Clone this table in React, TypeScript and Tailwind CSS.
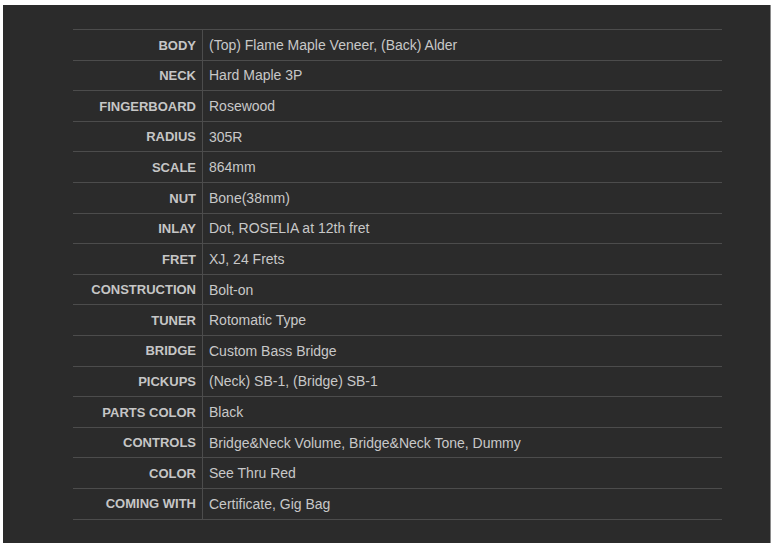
const specs: [string, string][] = [
  ['BODY', '(Top) Flame Maple Veneer, (Back) Alder'],
  ['NECK', 'Hard Maple 3P'],
  ['FINGERBOARD', 'Rosewood'],
  ['RADIUS', '305R'],
  ['SCALE', '864mm'],
  ['NUT', 'Bone(38mm)'],
  ['INLAY', 'Dot, ROSELIA at 12th fret'],
  ['FRET', 'XJ, 24 Frets'],
  ['CONSTRUCTION', 'Bolt-on'],
  ['TUNER', 'Rotomatic Type'],
  ['BRIDGE', 'Custom Bass Bridge'],
  ['PICKUPS', '(Neck) SB-1, (Bridge) SB-1'],
  ['PARTS COLOR', 'Black'],
  ['CONTROLS', 'Bridge&Neck Volume, Bridge&Neck Tone, Dummy'],
  ['COLOR', 'See Thru Red'],
  ['COMING WITH', 'Certificate, Gig Bag'],
]

export default function App() {
  return (
    <div className="h-[550px] w-[775px] bg-white pl-[3px] pt-[5px] font-['Liberation_Sans',Arial,sans-serif]">
      <div className="h-[538px] w-[768px] border-r border-[#8a8a8a] bg-[#2b2b2b] pl-[70px] pt-[24px]">
        <div className="w-[649px] border-t border-[#4c4c4c]">
          {specs.map(([label, value]) => (
            <div key={label} className="flex h-[30.6px] border-b border-[#4c4c4c]">
              <div className="flex w-[130px] items-center justify-end border-r border-[#4c4c4c] pr-[6px] pt-px text-[13px] font-semibold text-[#c6c6c6]">
                {label}
              </div>
              <div className="flex items-center pl-[6px] pt-px text-[14px] text-[#c8c8c8]">{value}</div>
            </div>
          ))}
        </div>
      </div>
    </div>
  )
}
